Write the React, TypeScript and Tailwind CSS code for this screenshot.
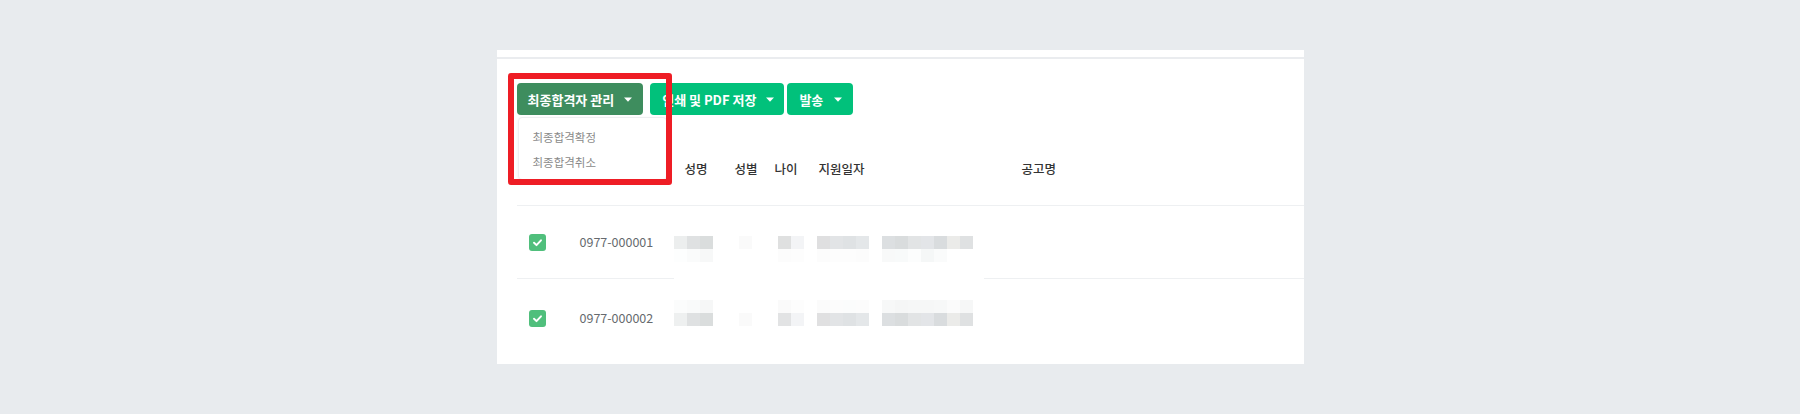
const font = { fontFamily: '"Noto Sans CJK KR", "Noto Sans", sans-serif' };

// 블러 처리된 셀 (모자이크)
const mosaic1 = {
  name: [['#eceeee', '#dfe1e2', '#dadddd'], ['#fdfefe', '#fafbfb', '#f7f8f8']],
  gender: [['#fafafa'], ['#ffffff']],
  age: [['#dfe0e0', '#f3f4f6'], ['#fcfcfc', '#fdfdfd']],
  date: [['#dfdfe0', '#e2e4e6', '#dfe2e4', '#e4e7e9'], ['#fcfcfc', '#fdfdfd', '#fdfdfd', '#fcfcfc']],
  title: [
    ['#dcdfe1', '#d9dcdd', '#e2e4e5', '#e3e5e8', '#d9dcde', '#ebebe9', '#dfe1e2'],
    ['#f8f9f9', '#f8fafa', '#fcfdfd', '#f5f7f7', '#fafbfb', '#ffffff', '#ffffff'],
  ],
};

const mosaic2 = {
  name: [['#fbfcfc', '#f9fafa', '#f6f7f7'], ['#eef0f0', '#dfe1e2', '#dadddd']],
  gender: [['#ffffff'], ['#fafafa']],
  age: [['#fafafa', '#fdfdfd'], ['#e2e3e4', '#f3f4f6']],
  date: [['#fbfbfb', '#fcfcfc', '#fbfcfc', '#fcfcfc'], ['#e0e0e1', '#e2e4e6', '#dfe2e4', '#e4e7e9']],
  title: [
    ['#f7f8f8', '#f5f6f6', '#f6f7f7', '#f6f7f7', '#f7f8f8', '#fbfbfb', '#f6f7f7'],
    ['#dcdfe1', '#d9dcdd', '#e2e4e5', '#e3e5e8', '#d9dcde', '#ebebe9', '#dfe1e2'],
  ],
};

function Mosaic({ cells, className = '' }: { cells: string[][]; className?: string }) {
  return (
    <div className={`flex flex-col ${className}`}>
      {cells.map((row, i) => (
        <div key={i} className="flex">
          {row.map((c, j) => (
            <span key={j} className="block h-[13px] w-[13px]" style={{ backgroundColor: c }} />
          ))}
        </div>
      ))}
    </div>
  );
}

function Caret() {
  return (
    <svg width="8" height="5" viewBox="0 0 8 5" className="shrink-0">
      <path d="M0 0.5 L8 0.5 L4 4.8 Z" fill="#ffffff" />
    </svg>
  );
}

function CheckBox() {
  return (
    <span className="flex h-[17px] w-[17px] items-center justify-center rounded-[3px] bg-[#50bf7c]">
      <svg width="11" height="11" viewBox="0 0 12 12">
        <polyline points="2.2,6.3 4.9,8.9 9.8,3.6" fill="none" stroke="#ffffff" strokeWidth="2.1" strokeLinecap="round" strokeLinejoin="round" />
      </svg>
    </span>
  );
}

const cols = 'grid grid-cols-[63px_94px_61px_40px_42px_65px_1fr]';

function Row({ no, m, shift, last }: { no: string; m: typeof mosaic1; shift: string; last?: boolean }) {
  return (
    <div className={`${cols} items-center ${last ? 'h-[78px]' : 'h-[73px] border-b border-[#eef0f2]'}`}>
      <div className="pl-[12px]">
        <CheckBox />
      </div>
      <div className="text-[12.5px] text-[#666a6e]">{no}</div>
      <Mosaic cells={m.name} className={shift} />
      <Mosaic cells={m.gender} className={`pl-[4px] ${shift}`} />
      <Mosaic cells={m.age} className={`pl-[3px] ${shift}`} />
      <Mosaic cells={m.date} className={shift} />
      <Mosaic cells={m.title} className={shift} />
    </div>
  );
}

export default function App() {
  return (
    <div className="min-h-[414px] bg-[#e8ebee] pt-[50px]" style={font}>
      <div className="relative mx-auto h-[314px] w-[807px] overflow-hidden bg-white">
        <div className="h-[9px] border-b-2 border-[#eaecef]" />

        <div className="pl-[20px]">
          {/* 툴바 */}
          <div className="relative mt-[24px] flex h-[32px] items-stretch">
            <button className="flex items-center gap-[10px] rounded-[4px] bg-[#3e8d5e] pl-[11px] pr-[11px] text-[13px] font-bold leading-none text-white">
              최종합격자 관리
              <Caret />
            </button>
            <button className="ml-[7px] flex items-center gap-[10px] rounded-[4px] bg-[#01c17b] pl-[12px] pr-[10px] text-[13px] font-bold leading-none text-white">
              인쇄 및 PDF 저장
              <Caret />
            </button>
            <button className="ml-[3px] flex items-center gap-[11px] rounded-[4px] bg-[#01c17b] pl-[12px] pr-[11px] text-[13px] font-bold leading-none text-white">
              발송
              <Caret />
            </button>

            <div className="absolute left-[1px] top-[34px] z-10 w-[149px] rounded-[4px] border border-[#eeeff1] bg-white pb-[4px] pt-[7px] shadow-[0_1px_3px_rgba(0,0,0,0.06)]">
              <div className="flex h-[25px] items-center pl-[14px] text-[11.5px] text-[#8a8a8a]">최종합격확정</div>
              <div className="flex h-[25px] items-center pl-[14px] text-[11.5px] text-[#8a8a8a]">최종합격취소</div>
            </div>
          </div>

          {/* 테이블 */}
          <div className="mt-[19px]">
            <div className={`${cols} h-[72px] items-center border-b border-[#eef0f2] text-[12.5px] font-medium text-[#333333]`}>
              <div />
              <div />
              <div className="pl-[11px]">성명</div>
              <div>성별</div>
              <div>나이</div>
              <div className="pl-[2px]">지원일자</div>
              <div className="pl-[140px]">공고명</div>
            </div>
            <div className="relative">
              <Row no="0977-000001" m={mosaic1} shift="mt-[13px]" />
              <span className="absolute left-[157px] top-[71px] h-[3px] w-[310px] bg-white" />
              <Row no="0977-000002" m={mosaic2} shift="mb-[10px]" last />
            </div>
          </div>
        </div>

        {/* 강조 표시 */}
        <div className="pointer-events-none absolute left-[11px] top-[23px] z-20 h-[112px] w-[164px] rounded-[3px] border-[6px] border-[#ee1d25]" />
      </div>
    </div>
  );
}
